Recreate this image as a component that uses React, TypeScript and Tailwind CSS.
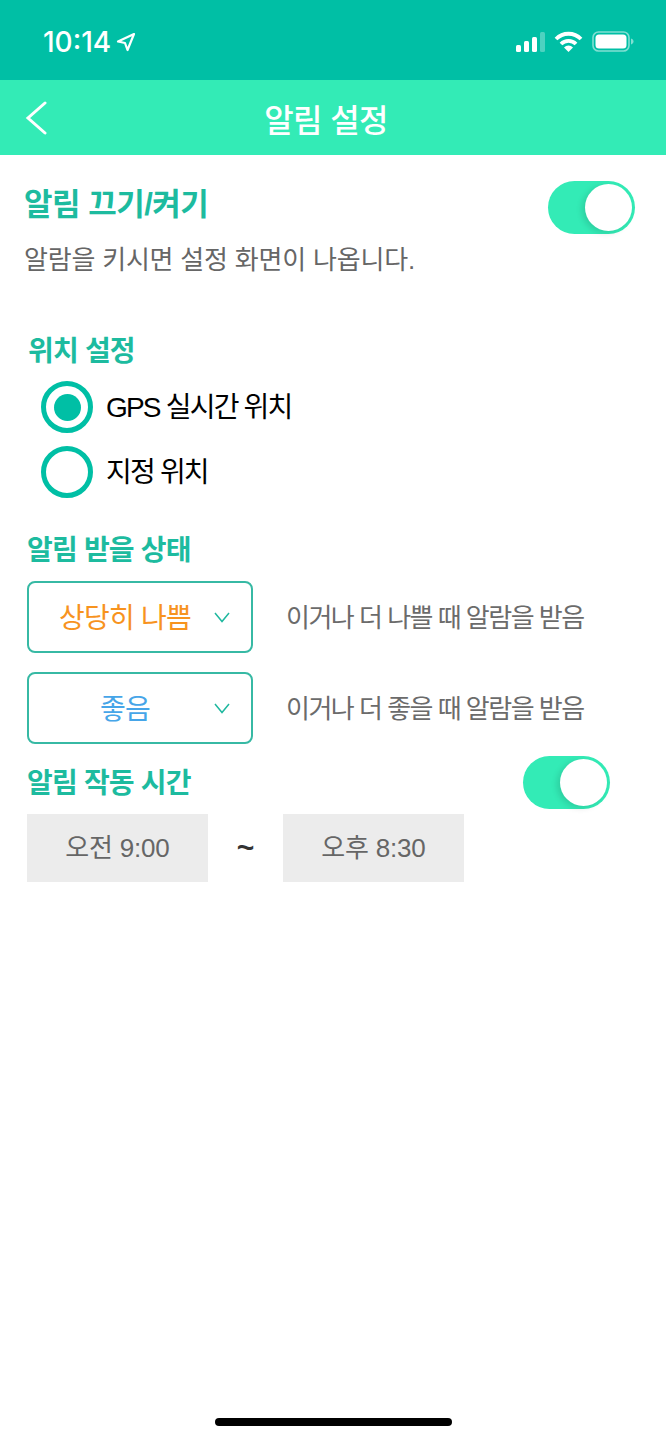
const font = { fontFamily: '"Liberation Sans", "Noto Sans CJK KR", sans-serif' };

function Toggle() {
  return (
    <div className="flex h-[53px] w-[87px] items-center justify-end rounded-full bg-[#33ebb6] pr-[3px]">
      <div className="h-[47px] w-[47px] rounded-full bg-white shadow-[-3px_2px_6px_rgba(0,0,0,0.12)]" />
    </div>
  );
}

function Radio({ checked, label }: { checked?: boolean; label: string }) {
  return (
    <div className="flex h-[52px] items-center">
      <div className="flex h-[52px] w-[52px] items-center justify-center rounded-full border-[5px] border-[#00bfa5]">
        {checked && <div className="h-[27px] w-[27px] rounded-full bg-[#00bfa5]" />}
      </div>
      <span className="ml-[13px] pt-[2px] text-[28px] leading-none tracking-[-1.8px] text-black">{label}</span>
    </div>
  );
}

function SelectRow({ value, color, hint }: { value: string; color: string; hint: string }) {
  return (
    <div className="flex items-center">
      <div className="relative flex h-[72px] w-[226px] items-center rounded-[8px] border-2 border-[#37b9a4]">
        <span className={`w-[192px] pt-[4px] text-center text-[28px] leading-none tracking-[-0.8px] ${color}`}>{value}</span>
        <svg className="absolute right-[21px] top-[29px]" width="16" height="11" viewBox="0 0 16 11" fill="none" stroke="#1fb89f" strokeWidth="1.5">
          <path d="M1 1l7 8.5L15 1" />
        </svg>
      </div>
      <span className="ml-[33px] pt-[2px] text-[26px] leading-none tracking-[-1.5px] text-[#6b6b6b]">{hint}</span>
    </div>
  );
}

export default function App() {
  return (
    <div className="relative h-[1440px] w-[666px] overflow-hidden bg-white" style={font}>
      {/* Status bar */}
      <div className="flex h-[80px] items-center justify-between bg-[#00bfa5] pl-[43px] pr-[32px] pt-[3px] text-white">
        <div className="flex items-center">
          <span className="text-[28px] font-medium leading-none" style={{ fontFamily: 'Inter, sans-serif' }}>10:14</span>
          <svg className="ml-[5px]" width="20" height="20" viewBox="0 0 20 20" fill="none" stroke="white" strokeWidth="2.2" strokeLinejoin="round">
            <path d="M18 2 2 9.5l7 1.5L11.5 18z" />
          </svg>
        </div>
        <div className="flex items-center">
          <svg width="29" height="20" viewBox="0 0 29 20" fill="white">
            <rect x="0" y="13" width="5" height="7" rx="1.5" />
            <rect x="8" y="9" width="5" height="11" rx="1.5" />
            <rect x="16" y="5" width="5" height="15" rx="1.5" />
            <rect x="24" y="0" width="5" height="20" rx="1.5" opacity="0.3" />
          </svg>
          <svg className="ml-[9px]" width="29" height="21" viewBox="0 0 29 21" fill="none" stroke="white" strokeWidth="3.8">
            <path d="M2 8a17.5 17.5 0 0 1 25 0" />
            <path d="M7 13a10.5 10.5 0 0 1 15 0" />
            <path d="M14.5 21l-4.5-4.5a6.2 6.2 0 0 1 9 0z" fill="white" stroke="none" />
          </svg>
          <svg className="ml-[9px]" width="42" height="21" viewBox="0 0 42 21" fill="none">
            <rect x="1" y="1" width="36" height="19" rx="5.5" stroke="white" strokeOpacity="0.5" strokeWidth="1.6" />
            <rect x="3.5" y="3.5" width="31" height="14" rx="3.5" fill="white" />
            <path d="M39 7.5c1.5.4 2.5 1.6 2.5 3s-1 2.6-2.5 3z" fill="white" fillOpacity="0.5" />
          </svg>
        </div>
      </div>

      {/* Nav bar */}
      <div className="relative flex h-[75px] items-center justify-center bg-[#33ebb6]">
        <svg className="absolute left-[25px] top-[21px]" width="22" height="34" viewBox="0 0 22 34" fill="none" stroke="white" strokeWidth="3" strokeLinecap="round">
          <path d="M20 2 3 17l17 15" />
        </svg>
        <h1 className="mr-[14px] pt-[6px] text-[32px] font-medium leading-none tracking-[-0.6px] text-white">알림 설정</h1>
      </div>

      {/* Master switch */}
      <div className="flex items-start justify-between pl-[24px] pr-[31px] pt-[26px]">
        <div>
          <div className="mt-[2px] text-[31px] font-semibold leading-[44px] tracking-[-0.5px] text-[#1dbb9f]">알림 끄기/켜기</div>
          <div className="mt-[15px] text-[26px] leading-[36px] tracking-[-0.2px] text-[#666666]">알람을 키시면 설정 화면이 나옵니다.</div>
        </div>
        <Toggle />
      </div>

      {/* Location */}
      <div className="pl-[28px] pt-[55px]">
        <div className="text-[28px] font-semibold leading-[38px] tracking-[-0.8px] text-[#1dbb9f]">위치 설정</div>
        <div className="ml-[13px] mt-[10px] flex flex-col gap-[13px]">
          <Radio checked label="GPS 실시간 위치" />
          <Radio label="지정 위치" />
        </div>
      </div>

      {/* Alert state */}
      <div className="pl-[27px] pt-[34px]">
        <div className="text-[28px] font-semibold leading-[38px] tracking-[-0.8px] text-[#1dbb9f]">알림 받을 상태</div>
        <div className="mt-[11px] flex flex-col gap-[19px]">
          <SelectRow value="상당히 나쁨" color="text-[#f7931e]" hint="이거나 더 나쁠 때 알람을 받음" />
          <SelectRow value="좋음" color="text-[#46a5e8]" hint="이거나 더 좋을 때 알람을 받음" />
        </div>
      </div>

      {/* Active time */}
      <div className="pl-[27px] pr-[56px] pt-[12px]">
        <div className="flex items-center justify-between">
          <div className="mt-[3px] text-[28px] font-semibold leading-[38px] tracking-[-0.8px] text-[#1dbb9f]">알림 작동 시간</div>
          <Toggle />
        </div>
        <div className="mt-[5px] flex items-center">
          <div className="flex h-[68px] w-[181px] items-center justify-center bg-[#ececec] text-[26px] leading-none tracking-[-0.2px] text-[#666666]">오전 9:00</div>
          <div className="w-[75px] text-center text-[30px] font-semibold leading-none text-[#333333]">~</div>
          <div className="flex h-[68px] w-[181px] items-center justify-center bg-[#ececec] text-[26px] leading-none tracking-[-0.2px] text-[#666666]">오후 8:30</div>
        </div>
      </div>

      {/* Home indicator */}
      <div className="absolute bottom-[14px] left-[215px] h-[8px] w-[237px] rounded-full bg-black" />
    </div>
  );
}
